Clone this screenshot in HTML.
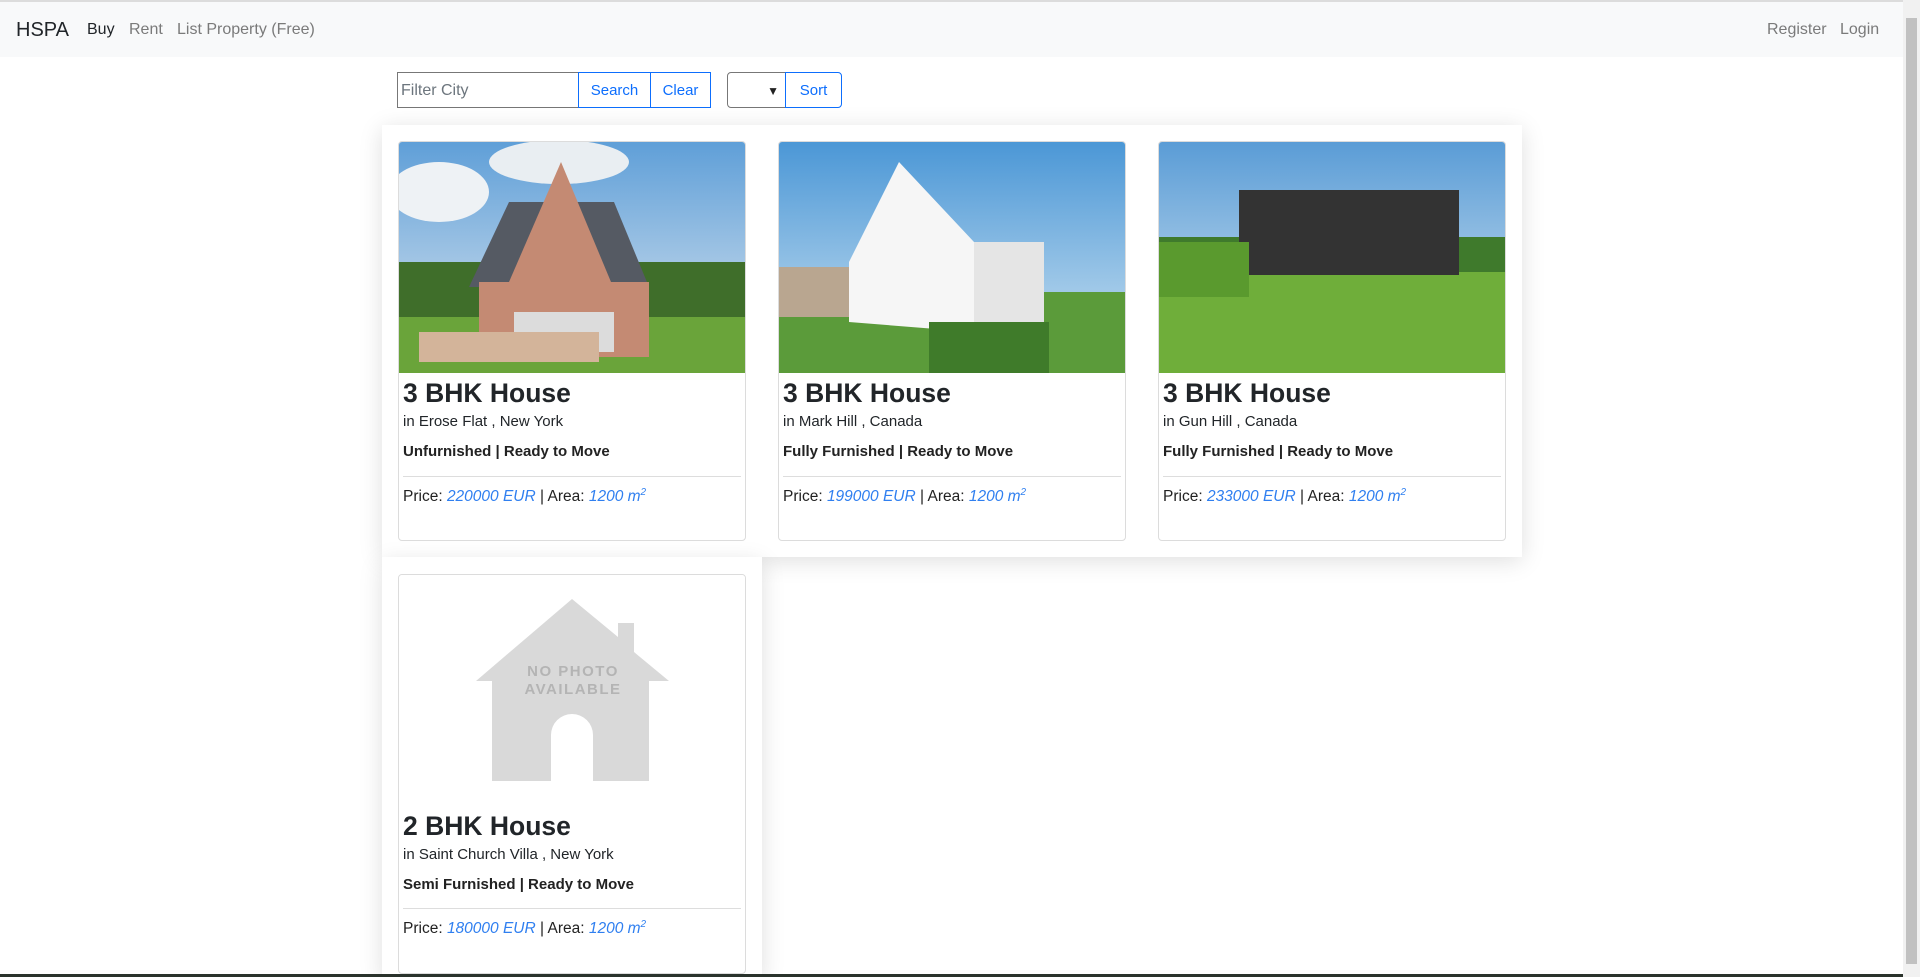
<!DOCTYPE html>
<html><head><meta charset="utf-8">
<style>
*{box-sizing:border-box;margin:0;padding:0}
body{width:1920px;height:977px;overflow:hidden;background:#fff;font-family:"Liberation Sans",sans-serif;color:#212529;position:relative}
.nav{position:absolute;left:0;top:0;width:1903px;height:57px;background:#f8f9fa;border-top:2px solid #dcdcdc}
.nav span{position:absolute;top:19px;font-size:16px;color:#7a7a7a}
.brand{left:16px!important;top:17px!important;font-size:20px!important;color:#212529!important}
.inp{position:absolute;top:72px;height:36px;border:1px solid #777;font-size:16px;color:#6c757d;padding:9px 3px}
.btn{position:absolute;top:72px;height:36px;border:1px solid #0d6efd;color:#0d6efd;font-size:15px;text-align:center;line-height:36px}
.wrap{position:absolute;background:#fff;box-shadow:0 4px 22px rgba(0,0,0,.13)}
.card{position:absolute;width:348px;background:#fff;border:1px solid #dcdcdc;border-radius:4px;overflow:hidden}
.card svg{display:block}
.t{position:absolute;left:4px;font-size:26.5px;font-weight:bold;color:#212529}
.l{position:absolute;left:4px;font-size:15px}
.f{position:absolute;left:4px;font-size:15px;font-weight:bold;color:#222}
.hr{position:absolute;left:4px;right:4px;height:1px;background:#ddd}
.p{position:absolute;left:4px;font-size:15.5px;color:#222}
.p i{color:#2f7ff0}
.p sup{font-size:10px}
.sb{position:absolute;right:0;top:0;width:17px;height:977px;background:#f1f1f1}
.sb div{position:absolute;left:3px;top:18px;width:11px;height:946px;background:#c1c1c1}
</style></head><body>
<div class="nav">
<span class="brand">HSPA</span>
<span style="left:87px;color:#212529">Buy</span>
<span style="left:129px">Rent</span>
<span style="left:177px">List Property (Free)</span>
<span style="left:1767px">Register</span>
<span style="left:1840px">Login</span>
</div>
<div class="inp" style="left:397px;width:182px">Filter City</div>
<div class="btn" style="left:578px;width:73px">Search</div>
<div class="btn" style="left:650px;width:61px">Clear</div>
<div class="inp" style="left:727px;width:59px;border-radius:4px 0 0 4px;color:#222;text-align:right;padding-right:6px;font-size:12px;line-height:18px">&#9660;</div>
<div class="btn" style="left:785px;width:57px;border-radius:0 4px 4px 0">Sort</div>

<div class="wrap" style="left:382px;top:125px;width:1140px;height:432px"></div>
<div class="wrap" style="left:382px;top:557px;width:380px;height:420px;box-shadow:0 6px 22px rgba(0,0,0,.13)"></div>

<div class="card" style="left:398px;top:141px;height:400px">
<svg width="348" height="231"><defs><linearGradient id="s1" x1="0" y1="0" x2="0" y2="1"><stop offset="0" stop-color="#5f9fd8"/><stop offset="1" stop-color="#dfe8f0"/></linearGradient></defs>
<rect width="348" height="231" fill="url(#s1)"/><ellipse cx="40" cy="50" rx="50" ry="30" fill="#eef2f5"/><ellipse cx="160" cy="20" rx="70" ry="22" fill="#e9eef2"/>
<rect y="120" width="348" height="70" fill="#3f6e2a"/><rect y="175" width="348" height="56" fill="#6aa43a"/>
<polygon points="70,145 110,60 215,60 250,145" fill="#555a63"/><rect x="80" y="140" width="170" height="75" fill="#c48a73"/>
<polygon points="110,140 162,20 212,140" fill="#c48a73"/><rect x="115" y="170" width="100" height="40" fill="#dcdcdc"/>
<rect x="20" y="190" width="180" height="30" fill="#d3b49a"/></svg>
<div class="t" style="top:236px">3 BHK House</div>
<div class="l" style="top:271px">in Erose Flat , New York</div>
<div class="f" style="top:301px">Unfurnished | Ready to Move</div>
<div class="hr" style="top:334px"></div>
<div class="p" style="top:345px">Price: <i>220000 EUR</i> | Area: <i>1200 m<sup>2</sup></i></div>
</div>

<div class="card" style="left:778px;top:141px;height:400px">
<svg width="348" height="231"><defs><linearGradient id="s2" x1="0" y1="0" x2="0" y2="1"><stop offset="0" stop-color="#4b97d6"/><stop offset="1" stop-color="#cfe4f2"/></linearGradient></defs>
<rect width="348" height="231" fill="url(#s2)"/><rect y="150" width="348" height="81" fill="#5b9b3a"/>
<polygon points="70,120 120,20 195,100 195,190 70,180" fill="#f6f6f6"/><rect x="195" y="100" width="70" height="90" fill="#e5e5e5"/>
<rect x="0" y="125" width="70" height="50" fill="#b9a690"/><rect x="150" y="180" width="120" height="51" fill="#3f7b2a"/></svg>
<div class="t" style="top:236px">3 BHK House</div>
<div class="l" style="top:271px">in Mark Hill , Canada</div>
<div class="f" style="top:301px">Fully Furnished | Ready to Move</div>
<div class="hr" style="top:334px"></div>
<div class="p" style="top:345px">Price: <i>199000 EUR</i> | Area: <i>1200 m<sup>2</sup></i></div>
</div>

<div class="card" style="left:1158px;top:141px;height:400px">
<svg width="348" height="231"><defs><linearGradient id="s3" x1="0" y1="0" x2="0" y2="1"><stop offset="0" stop-color="#5a9cd6"/><stop offset="1" stop-color="#d9e9f3"/></linearGradient></defs>
<rect width="348" height="231" fill="url(#s3)"/><rect y="95" width="348" height="50" fill="#3f7a2c"/><rect y="130" width="348" height="101" fill="#6fae3a"/>
<rect x="80" y="48" width="220" height="85" fill="#333333"/><rect x="0" y="100" width="90" height="55" fill="#5a9a2e"/></svg>
<div class="t" style="top:236px">3 BHK House</div>
<div class="l" style="top:271px">in Gun Hill , Canada</div>
<div class="f" style="top:301px">Fully Furnished | Ready to Move</div>
<div class="hr" style="top:334px"></div>
<div class="p" style="top:345px">Price: <i>233000 EUR</i> | Area: <i>1200 m<sup>2</sup></i></div>
</div>

<div class="card" style="left:398px;top:574px;height:400px">
<svg width="348" height="231"><rect width="348" height="231" fill="#fff"/>
<path d="M77,106 L173,24 L219,62 L219,48 L235,48 L235,77 L270,106 L250,106 L250,206 L194,206 L194,160 A21,21 0 0 0 152,160 L152,206 L93,206 L93,106 Z" fill="#d9d9d9"/>
<text x="174" y="101" font-family="Liberation Sans,sans-serif" font-weight="bold" font-size="15" fill="#b4b4b4" text-anchor="middle" letter-spacing="1.5">NO PHOTO</text>
<text x="174" y="119" font-family="Liberation Sans,sans-serif" font-weight="bold" font-size="15" fill="#b4b4b4" text-anchor="middle" letter-spacing="1.5">AVAILABLE</text></svg>
<div class="t" style="top:236px">2 BHK House</div>
<div class="l" style="top:271px">in Saint Church Villa , New York</div>
<div class="f" style="top:301px">Semi Furnished | Ready to Move</div>
<div class="hr" style="top:333px"></div>
<div class="p" style="top:344px">Price: <i>180000 EUR</i> | Area: <i>1200 m<sup>2</sup></i></div>
</div>
<div style="position:absolute;left:0;top:974px;width:1903px;height:3px;background:#2a332c"></div>
<div class="sb"><div></div></div>
</body></html>
